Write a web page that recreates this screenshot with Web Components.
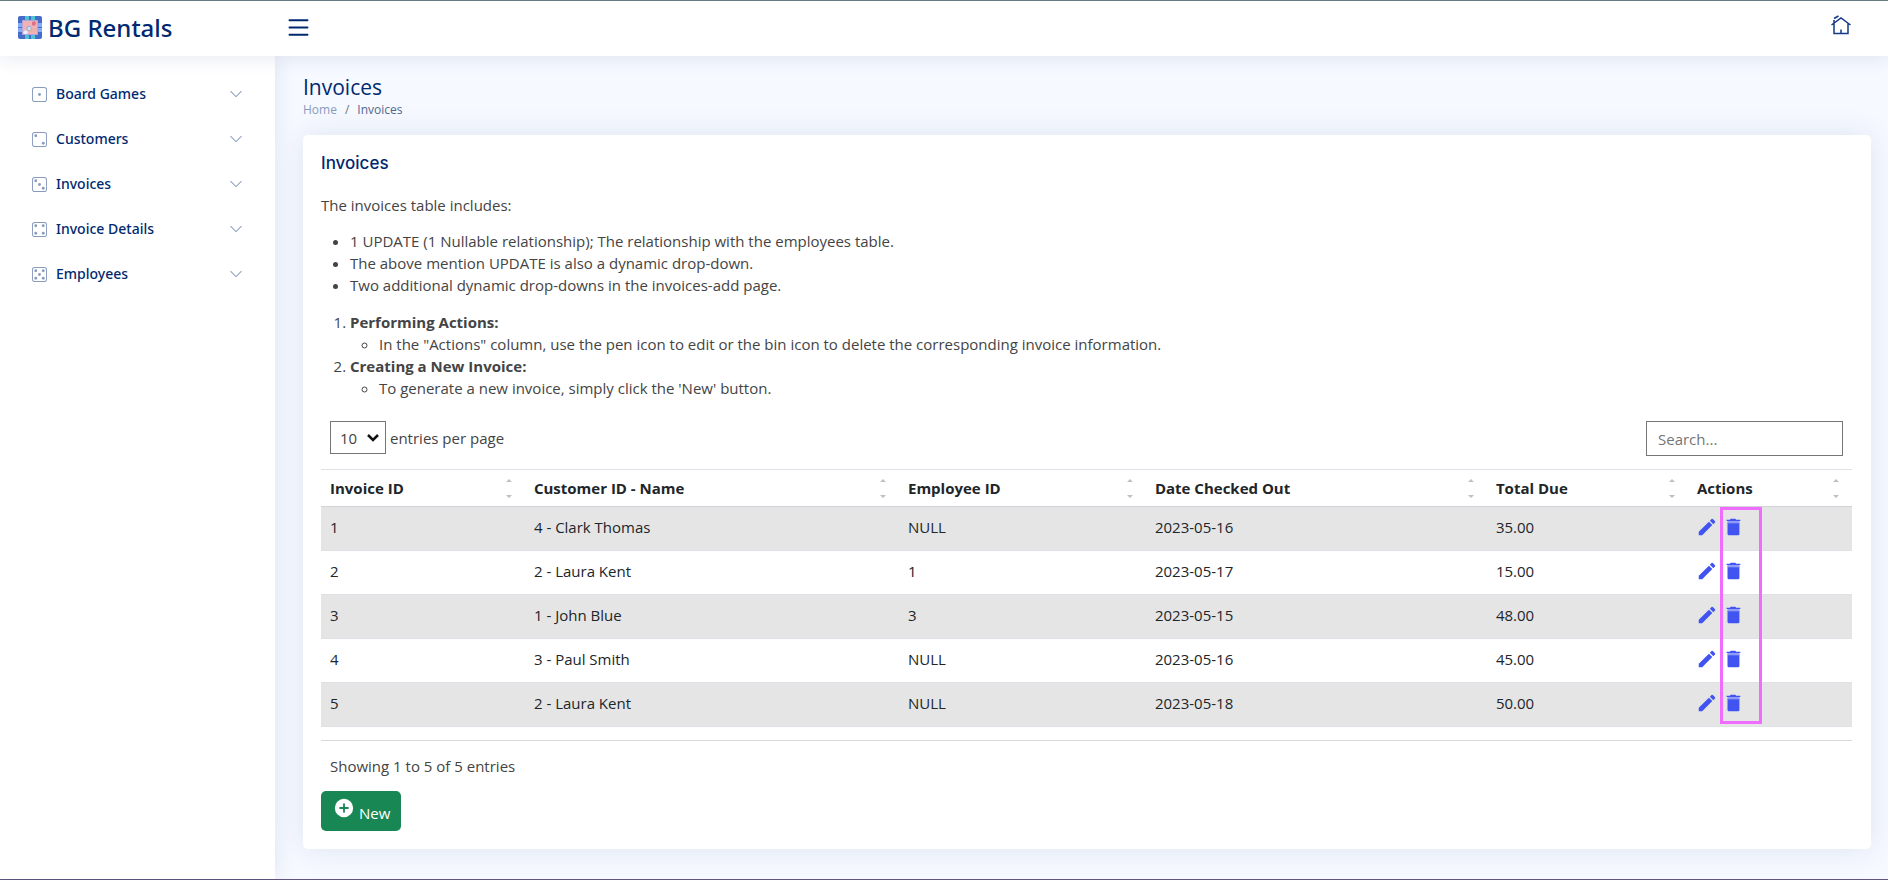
<!DOCTYPE html>
<html lang="en">
<head>
<meta charset="utf-8">
<title>Invoices - BG Rentals</title>
<style>
  html, body { height: 100%; }
  body {
    margin: 0;
    background: #f6f9ff;
    color: #444;
    font: 15px/22px "Open Sans", "Liberation Sans", sans-serif;
  }
</style>
</head>
<body>
<bg-app>
  <bg-header slot="header"></bg-header>
  <bg-sidebar slot="sidebar">
    <bg-nav-item pips="1">Board Games</bg-nav-item>
    <bg-nav-item pips="2">Customers</bg-nav-item>
    <bg-nav-item pips="3">Invoices</bg-nav-item>
    <bg-nav-item pips="4">Invoice Details</bg-nav-item>
    <bg-nav-item pips="5">Employees</bg-nav-item>
  </bg-sidebar>
  <bg-page-title></bg-page-title>
  <bg-card heading="Invoices">
    <bg-intro></bg-intro>
    <bg-data-table></bg-data-table>
    <bg-new-button></bg-new-button>
  </bg-card>
</bg-app>

<script>
class Base extends HTMLElement {
  connectedCallback() {
    if (this.shadowRoot) return;
    const root = this.attachShadow({ mode: 'open' });
    const tpl = document.createElement('template');
    tpl.innerHTML = this.render();
    root.append(tpl.content.cloneNode(true));
  }
}

customElements.define('bg-app', class extends Base {
  render() {
    return `
      <style>
        :host {
          display: grid;
          box-sizing: border-box;
          min-height: 100vh;
          grid-template: auto 1fr / 275px minmax(0, 1fr);
          border-top: 1px solid #6b7f85;
          border-bottom: 1px solid #62557f;
        }
        ::slotted(bg-header) { grid-column: 1 / -1; z-index: 2; }
        ::slotted(bg-sidebar) { z-index: 1; }
        main { padding: 18px 17px 18px 28px; }
      </style>
      <slot name="header"></slot>
      <slot name="sidebar"></slot>
      <main><slot></slot></main>`;
  }
});

customElements.define('bg-header', class extends Base {
  render() {
    return `
      <style>
        :host {
          display: flex;
          align-items: center;
          box-sizing: border-box;
          height: 55px;
          padding: 0 35px 2px 18px;
          background: #fff;
          box-shadow: 0 2px 20px rgba(1, 41, 112, .1);
          color: #012970;
        }
        a { display: flex; align-items: center; color: inherit; text-decoration: none; }
        .brand { width: 266px; gap: 6px; font: 500 24px/28px "Noto Sans", "Open Sans", sans-serif; }
        button { display: flex; padding: 0; border: 0; background: none; color: inherit; }
        .home { margin-left: auto; padding-bottom: 6px; }
        svg { display: block; }
      </style>
      <a class="brand" href="#">
        <svg width="24" height="23" viewBox="0 0 24 23" aria-hidden="true">
          <rect width="24" height="23" rx="2" fill="#456cc9"/>
          <path d="M7 0h4v4H7zM13 0h4v4h-4zM7 19h4v4H7zM13 19h4v4h-4z" fill="#4fc3d4"/>
          <path d="M0 7h4v4H0zM0 12h4v4H0zM20 7h4v4h-4zM20 12h4v4h-4z" fill="#86aaf5"/>
          <rect x="4.500" y="4.500" width="15" height="14" fill="#f1b2b5" stroke="#b3a5da"/>
          <path d="M14 6l3-1 1 3-2 2-2-1z" fill="#dc7189"/>
          <path d="M9 11l3-1 2 3-2 2-3-1z" fill="#c9defc" stroke="#7f9ce0" stroke-width=".7"/>
          <path d="M5 16l3-2 2 2-1 2H6z" fill="#e8effe"/>
          <path d="M13 16v-4M15.500 16v-3M17.500 15v-3" stroke="#dabb87" stroke-width="1.200"/>
        </svg>
        <span>BG Rentals</span>
      </a>
      <button type="button" aria-label="Toggle sidebar">
        <svg width="29" height="29" viewBox="0 0 16 16" fill="currentColor">
          <path fill-rule="evenodd" d="M2.500 12a.5.5 0 0 1 .5-.5h10a.5.5 0 0 1 0 1H3a.5.5 0 0 1-.5-.5m0-4a.5.5 0 0 1 .5-.5h10a.5.5 0 0 1 0 1H3a.5.5 0 0 1-.5-.5m0-4a.5.5 0 0 1 .5-.5h10a.5.5 0 0 1 0 1H3a.5.5 0 0 1-.5-.5"/>
        </svg>
      </button>
      <a class="home" href="#" aria-label="Home">
        <svg width="24" height="22" viewBox="0 0 24 22" fill="none" stroke="#153a86" stroke-width="1.500">
          <path d="M2.500 11L12 4l9.500 7M5 9.500V19.500h14V9.500M12 19.500v-4M5 9V6M5 4.500L9.500 2"/>
        </svg>
      </a>`;
  }
});

customElements.define('bg-sidebar', class extends Base {
  render() {
    return `
      <style>
        :host {
          display: block;
          padding: 18px;
          background: #fff;
          box-shadow: 0 0 20px rgba(1, 41, 112, .1);
        }
        nav { display: grid; gap: 5px; }
      </style>
      <nav aria-label="Main"><slot></slot></nav>`;
  }
});

const PIPS = {
  1: [[8, 8]],
  2: [[4, 4], [12, 12]],
  3: [[4, 4], [8, 8], [12, 12]],
  4: [[4, 4], [12, 4], [4, 12], [12, 12]],
  5: [[4, 4], [12, 4], [8, 8], [4, 12], [12, 12]]
};

customElements.define('bg-nav-item', class extends Base {
  render() {
    const dots = PIPS[this.getAttribute('pips')]
      .map(([x, y]) => `<circle cx="${x}" cy="${y}" r="1.500"/>`).join('');
    return `
      <style>
        :host { display: block; }
        a {
          display: flex;
          align-items: center;
          height: 40px;
          padding: 0 14px;
          gap: 9px;
          color: #012970;
          font: 500 14px/22px "Noto Sans", "Open Sans", sans-serif;
          text-decoration: none;
        }
        svg { fill: #899bbd; }
        .chevron { margin-left: auto; }
      </style>
      <a href="#">
        <svg width="15" height="15" viewBox="0 0 16 16" aria-hidden="true">
          ${dots}
          <path d="M13 1a2 2 0 0 1 2 2v10a2 2 0 0 1-2 2H3a2 2 0 0 1-2-2V3a2 2 0 0 1 2-2zM3 0a3 3 0 0 0-3 3v10a3 3 0 0 0 3 3h10a3 3 0 0 0 3-3V3a3 3 0 0 0-3-3z"/>
        </svg>
        <span><slot></slot></span>
        <svg class="chevron" width="14" height="14" viewBox="0 0 16 16" aria-hidden="true">
          <path fill-rule="evenodd" d="M1.646 4.646a.5.5 0 0 1 .708 0L8 10.293l5.646-5.647a.5.5 0 0 1 .708.708l-6 6a.5.5 0 0 1-.708 0l-6-6a.5.5 0 0 1 0-.708"/>
        </svg>
      </a>`;
  }
});

customElements.define('bg-page-title', class extends Base {
  render() {
    return `
      <style>
        :host { display: block; margin-bottom: 15px; }
        h1 { margin: 0; color: #012970; font-size: 21px; font-weight: 400; line-height: 26px; }
        ol { display: flex; margin: 0; padding: 0; list-style: none; font-size: 12px; line-height: 20px; color: #51678f; }
        li + li::before { content: "/"; padding: 0 8px; color: #6c757d; }
        a { color: #899bbd; text-decoration: none; }
      </style>
      <h1>Invoices</h1>
      <nav aria-label="Breadcrumb"><ol><li><a href="#">Home</a></li><li>Invoices</li></ol></nav>`;
  }
});

customElements.define('bg-card', class extends Base {
  render() {
    return `
      <style>
        :host {
          display: block;
          padding: 18px 19px 18px 18px;
          border-radius: 5px;
          background: #fff;
          box-shadow: 0 0 30px rgba(1, 41, 112, .1);
        }
        h2 { margin: 0 0 21px; color: #012970; font: 500 17px/20px Inter, sans-serif; }
      </style>
      <h2>${this.getAttribute('heading')}</h2>
      <slot></slot>`;
  }
});

customElements.define('bg-intro', class extends Base {
  render() {
    return `
      <style>
        :host { display: block; }
        p { margin: 0 0 14px; }
        ul, ol { margin: 0 0 15px; padding-left: 29px; }
        ol ul { margin: 0; }
      </style>
      <p>The invoices table includes:</p>
      <ul>
        <li>1 UPDATE (1 Nullable relationship); The relationship with the employees table.</li>
        <li>The above mention UPDATE is also a dynamic drop-down.</li>
        <li>Two additional dynamic drop-downs in the invoices-add page.</li>
      </ul>
      <ol>
        <li><b>Performing Actions:</b>
          <ul><li>In the "Actions" column, use the pen icon to edit or the bin icon to delete the corresponding invoice information.</li></ul>
        </li>
        <li><b>Creating a New Invoice:</b>
          <ul><li>To generate a new invoice, simply click the 'New' button.</li></ul>
        </li>
      </ol>`;
  }
});

const COLUMNS = [
  ['Invoice ID', 204], ['Customer ID - Name', 374], ['Employee ID', 247],
  ['Date Checked Out', 341], ['Total Due', 201], ['Actions', 164]
];
const INVOICES = [
  ['1', '4 - Clark Thomas', 'NULL', '2023-05-16', '35.00'],
  ['2', '2 - Laura Kent', '1', '2023-05-17', '15.00'],
  ['3', '1 - John Blue', '3', '2023-05-15', '48.00'],
  ['4', '3 - Paul Smith', 'NULL', '2023-05-16', '45.00'],
  ['5', '2 - Laura Kent', 'NULL', '2023-05-18', '50.00']
];

customElements.define('bg-data-table', class extends Base {
  render() {
    const total = COLUMNS.reduce((sum, c) => sum + c[1], 0);
    const cols = COLUMNS.map(c => `<col style="width:${(c[1] / total * 100).toFixed(2)}%">`).join('');
    const heads = COLUMNS.map(c => `
      <th scope="col"><button type="button">${c[0]}
        <svg width="6" height="20" viewBox="0 0 6 20" aria-hidden="true"><path d="M0 4l3-3 3 3zM0 17h6l-3 3z"/></svg>
      </button></th>`).join('');
    const rows = INVOICES.map((r, i) => `
      <tr>${r.map(v => `<td>${v}</td>`).join('')}
        <td class="actions">${i === 0 ? '<span class="marker"></span>' : ''}
          <div>
            <a href="#" aria-label="Edit invoice ${r[0]}"><svg width="22" height="22" viewBox="0 0 24 24"><path d="M3 17.250V21h3.750L17.810 9.940l-3.750-3.750zM20.710 7.040a1 1 0 0 0 0-1.410l-2.340-2.340a1 1 0 0 0-1.410 0l-1.830 1.830 3.750 3.750z"/></svg></a>
            <a href="#" aria-label="Delete invoice ${r[0]}"><svg width="22" height="22" viewBox="0 0 24 24"><path d="M6 7h13v12.500a1.500 1.500 0 0 1-1.500 1.500h-10A1.500 1.500 0 0 1 6 19.500z"/><path d="M6 5.500h13V8H6z" fill="#8f9af7"/><path d="M5 4h3.500l1-1h5l1 1H20v1.500H5V4z"/></svg></a>
          </div>
        </td>
      </tr>`).join('');
    return `
      <style>
        :host { display: block; margin-bottom: 14px; }
        .top { display: flex; justify-content: space-between; align-items: flex-start; padding: 7px 9px 13px; }
        .top label { display: flex; align-items: center; gap: 4px; }
        select, input {
          box-sizing: border-box;
          border: 1px solid #767676;
          border-radius: 0;
          background: #fff;
          font: inherit;
        }
        .pick { display: grid; align-items: center; }
        .pick > * { grid-area: 1 / 1; }
        .pick svg { justify-self: end; margin-right: 7px; pointer-events: none; }
        select { appearance: none; width: 56px; height: 33px; padding: 0 0 0 9px; color: #444; }
        input { width: 197px; height: 35px; padding: 0 11px; }
        input::placeholder { color: #757575; }
        .scroll { border-bottom: 1px solid #d9d9d9; padding-bottom: 13px; }
        table { width: 100%; table-layout: fixed; border-collapse: separate; border-spacing: 0; color: #212529; border-top: 1px solid #dee2e6; }
        th, td { box-sizing: border-box; padding: 0 9px; text-align: left; }
        th { height: 37px; border-bottom: 1px solid #d0d4d8; }
        th button {
          display: flex;
          align-items: center;
          justify-content: space-between;
          width: 100%;
          padding: 0 4px 0 0;
          border: 0;
          background: none;
          color: inherit;
          font: inherit;
          font-weight: 700;
        }
        th svg { fill: #bfbfbf; }
        td { height: 44px; padding-bottom: 4px; border-bottom: 1px solid #dee2e6; }
        tr:nth-child(odd) td { background: #e5e5e5; }
        .actions { position: relative; padding-left: 8px; }
        .actions div { display: flex; gap: 4px; }
        .actions a { display: block; }
        .actions svg { display: block; fill: #4154f1; }
        .marker {
          position: absolute;
          left: 32px;
          top: 0;
          box-sizing: border-box;
          width: 42px;
          height: 217px;
          border: 3px solid #f06cff;
          pointer-events: none;
          z-index: 1;
        }
        .info { padding: 14px 9px 0; }
      </style>
      <div class="top">
        <label>
          <span class="pick">
            <select><option>10</option></select>
            <svg width="12" height="8" viewBox="0 0 12 8" fill="none" stroke="#111" stroke-width="2.500" aria-hidden="true"><path d="M1 1l5 5 5-5"/></svg>
          </span>
          <span>entries per page</span>
        </label>
        <input type="search" placeholder="Search..." aria-label="Search invoices">
      </div>
      <div class="scroll">
        <table>
          <colgroup>${cols}</colgroup>
          <thead><tr>${heads}</tr></thead>
          <tbody>${rows}</tbody>
        </table>
      </div>
      <div class="info">Showing 1 to 5 of 5 entries</div>`;
  }
});

customElements.define('bg-new-button', class extends Base {
  render() {
    return `
      <style>
        :host { display: block; }
        button {
          display: flex;
          align-items: center;
          gap: 4px;
          height: 40px;
          padding: 0 11px 0 12px;
          border: 0;
          border-radius: 5px;
          background: #198754;
          color: #fff;
          font: inherit;
          font-weight: 500;
        }
        svg { align-self: flex-start; margin-top: 6px; }
        span { padding-top: 4px; }
      </style>
      <button type="button">
        <svg width="22" height="22" viewBox="0 0 24 24" fill="#fff" aria-hidden="true"><path d="M12 2a10 10 0 1 0 0 20 10 10 0 0 0 0-20m5 11h-4v4h-2v-4H7v-2h4V7h2v4h4z"/></svg>
        <span>New</span>
      </button>`;
  }
});
</script>
</body>
</html>
